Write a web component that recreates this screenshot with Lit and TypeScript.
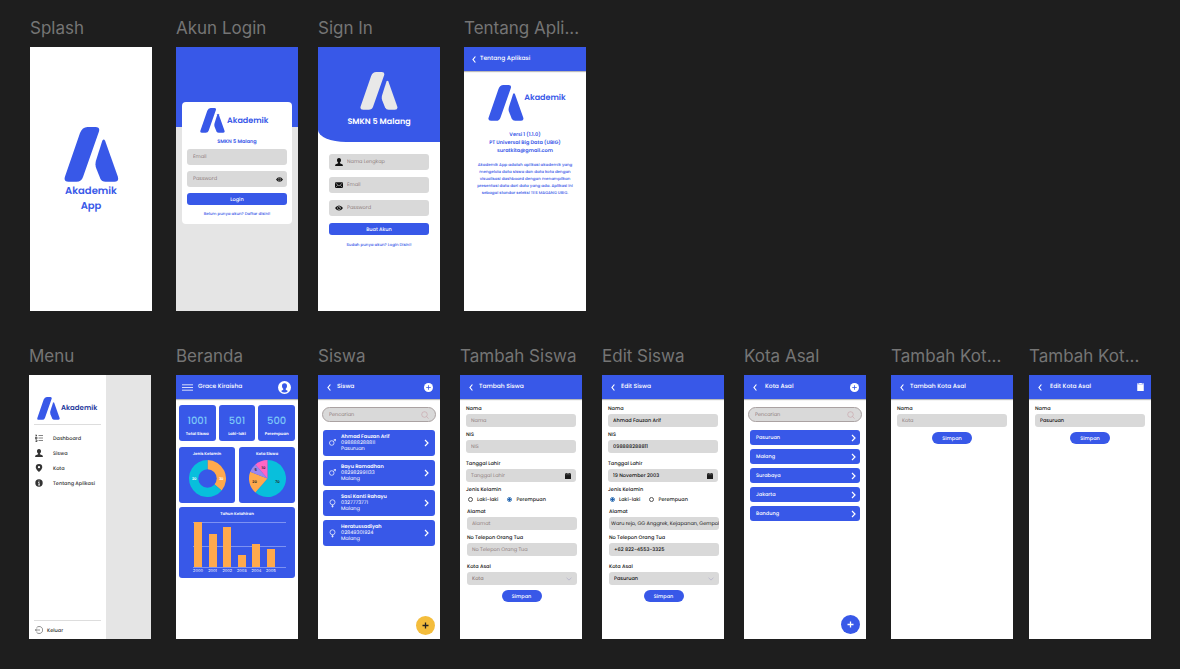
import { LitElement, html, css, svg, nothing } from "lit";
import { customElement, property } from "lit/decorators.js";
import { classMap } from "lit/directives/class-map.js";
import { styleMap } from "lit/directives/style-map.js";

const base = css`
  :host {
    --blue: #3858e8;
    --field: #d9d9d9;
    --edge: #e5e5e5;
    display: flex;
    flex-direction: column;
    flex: 1;
    min-height: 0;
    font-family: Poppins, Inter, sans-serif;
    font-size: 5px;
    line-height: 7px;
    text-rendering: geometricPrecision;
    color: #222;
  }
  *, *::before, *::after { box-sizing: border-box; }
  svg { display: block; flex: none; }
  p, h3, ul { margin: 0; padding: 0; }
  button, input, select {
    font: inherit;
    color: inherit;
    text-rendering: inherit;
    margin: 0;
    padding: 0;
    border: 0;
    background: none;
    min-width: 0;
  }
  button { cursor: pointer; }
  a { color: var(--blue); text-decoration: none; }
  ::placeholder { color: #8f7e7e; opacity: 1; }
  .brand { font-weight: 600; color: var(--blue); }
  .box {
    display: flex;
    align-items: center;
    background: var(--field);
    border-radius: 3px;
  }
  .box input, .box select { flex: 1; height: 100%; outline: none; }
`;

const logo = (size: number, color = "#3858e8") => html`
  <svg width=${size} height=${size} viewBox="0 0 54 55" fill=${color} aria-hidden="true">
    <path d="M23 0H31Q36 0 34.3 5L18.5 50Q17 54.7 12 54.7H4Q-1.2 54.7 .5 49.5L15.5 6Q17.8 0 23 0Z" />
    <path d="M37.8 13.8Q39.2 11.3 40.6 13.8L53.3 49.5Q54.8 54.7 50 54.7H41Q37.3 54.7 35.8 51.5L31.6 41Q30.4 37.6 31.5 33.5Z" />
  </svg>`;

const eye = (w = 8) => html`
  <svg width=${w} height=${w} viewBox="0 0 16 16" aria-hidden="true">
    <path d="M0 8Q3.5 3 8 3T16 8Q12.5 13 8 13T0 8Z" fill="#111" />
    <circle cx="8" cy="8" r="3.2" fill="none" stroke="#d9d9d9" stroke-width="1" />
    <circle cx="9" cy="7" r=".9" fill="#d9d9d9" />
  </svg>`;

const person = (color: string) => html`
  <svg width="8" height="8" viewBox="0 0 16 16" fill=${color} aria-hidden="true">
    <path d="M8 0C5 0 3.8 2.3 4 4.8 4.2 7 5.3 8.2 6.2 9V10.6L1.6 12.4Q.2 13 .2 16H15.8Q15.8 13 14.4 12.4L9.8 10.6V9C10.7 8.2 11.8 7 12 4.8 12.2 2.3 11 0 8 0Z" />
  </svg>`;

const mail = html`
  <svg width="8" height="8" viewBox="0 0 16 16" aria-hidden="true">
    <rect y="2.5" width="16" height="11.5" rx="1.5" fill="#111" />
    <path d="M1 4L8 10L15 4M1.2 12.8L5.6 8.4M14.8 12.8L10.4 8.4" fill="none" stroke="#d9d9d9" stroke-width="1.1" />
  </svg>`;

const chevronLeft = html`
  <svg width="4" height="7" viewBox="0 0 4 7" aria-hidden="true">
    <path d="M3.4 .5L1 3.5L3.4 6.5" fill="none" stroke="#fff" stroke-width="1.2" />
  </svg>`;

const chevronRight = html`
  <svg width="5" height="8" viewBox="0 0 5 8" aria-hidden="true">
    <path d="M1 1L4 4L1 7" fill="none" stroke="#fff" stroke-width="1.2" />
  </svg>`;

const chevronDown = html`
  <svg width="6" height="4" viewBox="0 0 6 4" aria-hidden="true">
    <path d="M.6 .8L3 3.1L5.4 .8" fill="none" stroke="#a9a6c4" stroke-width=".6" />
  </svg>`;

const calendar = html`
  <svg width="6" height="6" viewBox="0 0 14 14" aria-hidden="true">
    <path d="M0 1H3V0H5V1H9V0H11V1H14V14H0Z" fill="#1b1b1b" />
    <path d="M1 4H13" stroke="#777" stroke-width="1" />
  </svg>`;

const magnifier = html`
  <svg width="8" height="8" viewBox="0 0 16 16" fill="none" stroke="#c9a5ab" stroke-width="1.3" aria-hidden="true">
    <circle cx="7" cy="7" r="5.6" /><path d="M11 11L15 15.2" />
  </svg>`;

const addDisc = html`
  <svg width="9" height="9" viewBox="0 0 18 18" aria-hidden="true">
    <circle cx="9" cy="9" r="9" fill="#fff" />
    <path d="M9 4.5V13.5M4.5 9H13.5" stroke="#3858e8" stroke-width="1.6" />
  </svg>`;

const trash = html`
  <svg width="7" height="8" viewBox="0 0 14 16" fill="#fff" aria-hidden="true">
    <path d="M0 1H4L5 0H9L10 1H14V2.8H0ZM.5 3.6H13.5V16H.5Z" />
  </svg>`;

/* ---------- Shared bar at the top of the inner screens ---------- */

@customElement("top-bar")
export class TopBar extends LitElement {
  @property() heading = "";
  @property() action = "";
  @property() spacing = "";
  static styles = [base, css`
    :host { flex: none; }
    header {
      display: flex;
      align-items: center;
      gap: 6px;
      height: 24px;
      padding: 0 7px 0 9px;
      background: var(--blue);
      color: #fff;
      font-size: 6px;
      box-shadow: 0 1px 1px #0004;
    }
    header.tight { gap: 4px; padding-left: 8px; }
    header.wide { gap: 8px; }
    h3 { flex: 1; font-size: 6px; font-weight: 500; white-space: nowrap; }
    button { display: flex; }
  `];
  render() {
    return html`<header class=${this.spacing}>
      <button aria-label="Kembali">${chevronLeft}</button>
      <h3>${this.heading}</h3>
      ${this.action === "add" ? html`<button aria-label="Tambah">${addDisc}</button>` : nothing}
      ${this.action === "delete" ? html`<button aria-label="Hapus">${trash}</button>` : nothing}
    </header>`;
  }
}

@customElement("splash-screen")
export class SplashScreen extends LitElement {
  static styles = [base, css`
    :host { align-items: center; gap: 1px; padding-top: 80px; }
    .brand { font-size: 10px; line-height: 15px; text-align: center; }
  `];
  render() {
    return html`${logo(55)}<p class="brand">Akademik<br />App</p>`;
  }
}

@customElement("login-screen")
export class LoginScreen extends LitElement {
  static styles = [base, css`
    :host {
      padding: 55px 6px 0;
      background: linear-gradient(var(--blue) 80px, var(--edge) 80px);
    }
    form {
      display: flex;
      flex-direction: column;
      gap: 6px;
      padding: 6px 5px;
      background: #fff;
      border-radius: 4px;
    }
    .head { display: flex; align-items: center; gap: 2px; padding-left: 13px; }
    .head .brand { font-size: 8px; }
    .school { text-align: center; margin: -1px 0 -2px; }
    .box { height: 16px; padding: 0 4px 0 6px; }
    .submit {
      height: 12px;
      border-radius: 3px;
      background: var(--blue);
      color: #fff;
      font-weight: 500;
    }
    a { text-align: center; font-size: 4px; font-weight: 500; }
  `];
  render() {
    return html`<form>
      <div class="head">${logo(25)}<span class="brand">Akademik</span></div>
      <p class="brand school">SMKN 5 Malang</p>
      <label class="box"><input type="email" placeholder="Email" aria-label="Email" /></label>
      <label class="box"><input type="password" placeholder="Password" aria-label="Password" />${eye(7)}</label>
      <button class="submit" type="button">Login</button>
      <a href="#daftar">Belum punya akun? Daftar disini!</a>
    </form>`;
  }
}

@customElement("signup-screen")
export class SignupScreen extends LitElement {
  static styles = [base, css`
    .hero {
      display: flex;
      flex-direction: column;
      align-items: center;
      gap: 8px;
      height: 95px;
      padding-top: 25px;
      background: var(--blue);
      border-bottom-left-radius: 28px 12px;
      color: #fff;
      font-size: 8px;
      font-weight: 600;
    }
    form { display: flex; flex-direction: column; gap: 7px; padding: 12px 11px; }
    .box { height: 16px; padding: 0 6px; gap: 4px; }
    .submit {
      height: 12px;
      border-radius: 3px;
      background: var(--blue);
      color: #fff;
      font-weight: 500;
    }
    a { text-align: center; font-size: 4px; font-weight: 500; }
  `];
  render() {
    return html`
      <div class="hero">${logo(38, "#e8e8e8")}<span>SMKN 5 Malang</span></div>
      <form>
        <label class="box">${person("#111")}<input placeholder="Nama Lengkap" aria-label="Nama Lengkap" /></label>
        <label class="box">${mail}<input type="email" placeholder="Email" aria-label="Email" /></label>
        <label class="box">${eye()}<input type="password" placeholder="Password" aria-label="Password" /></label>
        <button class="submit" type="button">Buat Akun</button>
        <a href="#login">Sudah punya akun? Login Disini!</a>
      </form>`;
  }
}

@customElement("about-screen")
export class AboutScreen extends LitElement {
  static styles = [base, css`
    .head { display: flex; justify-content: center; padding: 14px 0 0 4px; }
    .head .brand { font-size: 8px; line-height: 26px; }
    .facts { margin-top: 10px; text-align: center; line-height: 8px; }
    .blurb {
      padding: 7px 8px 0;
      font-size: 4px;
      line-height: 7px;
      font-weight: 500;
      text-align: center;
      color: var(--blue);
    }
  `];
  render() {
    return html`
      <top-bar heading="Tentang Aplikasi" spacing="tight"></top-bar>
      <div class="head">${logo(36)}<span class="brand">Akademik</span></div>
      <p class="brand facts">Versi 1 (1.1.0)<br />PT Universal Big Data (UBIG)<br />suratkita@gmail.com</p>
      <p class="blurb">
        Akademik App adalah aplikasi akademik yang<br />
        mengelola data siswa dan data kota dengan<br />
        visualisasi dashboard dengan menampilkan<br />
        presentasi data dari data yang ada. Aplikasi ini<br />
        sebagai standar seleksi TES MAGANG UBIG.
      </p>`;
  }
}

@customElement("menu-screen")
export class MenuScreen extends LitElement {
  static styles = [base, css`
    :host { background: linear-gradient(90deg, #fff 77px, var(--edge) 77px); }
    nav {
      display: flex;
      flex-direction: column;
      flex: 1;
      width: 77px;
      padding: 22px 5px 5px;
    }
    .head {
      display: flex;
      align-items: center;
      gap: 1px;
      padding: 0 3px 4px;
      border-bottom: 1px solid #ddd;
    }
    .head .brand { font-size: 7px; color: #24389c; }
    ul { display: flex; flex-direction: column; gap: 7px; list-style: none; padding: 9px 1px; flex: 1; }
    a { display: flex; align-items: center; gap: 10px; height: 8px; color: #333; font-weight: 500; }
    .out { gap: 4px; height: 14px; padding: 5px 1px 0; border-top: 1px solid #ddd; }
  `];
  render() {
    return html`<nav>
      <div class="head">${logo(23)}<span class="brand">Akademik</span></div>
      <ul>
        <li><a href="#dashboard">
          <svg width="8" height="8" viewBox="0 0 16 16" fill="none" stroke="#333" stroke-width="1.2">
            <path d="M7 3H16M7 8H16M7 13H16" /><path d="M2 1V4.5M4 3H2M1 6.5H4V9.5H1ZM1 12H4V15H1" stroke-width="1.6" />
          </svg>Dashboard</a></li>
        <li><a href="#siswa">${person("#333")}Siswa</a></li>
        <li><a href="#kota">
          <svg width="8" height="8" viewBox="0 0 16 16" fill="#333">
            <path fill-rule="evenodd" d="M8 0A6.5 6.5 0 0 0 1.5 6.5C1.5 10.5 8 16 8 16S14.5 10.5 14.5 6.5A6.5 6.5 0 0 0 8 0ZM8 4A2.3 2.3 0 1 1 8 8.6A2.3 2.3 0 1 1 8 4Z" />
          </svg>Kota</a></li>
        <li><a href="#tentang">
          <svg width="8" height="8" viewBox="0 0 16 16">
            <circle cx="8" cy="8" r="7.4" fill="#333" />
            <path d="M8 3.2V5.2M6.4 7H8.2V12M6.2 12H10" fill="none" stroke="#fff" stroke-width="1.7" />
          </svg>Tentang Aplikasi</a></li>
      </ul>
      <a class="out" href="#keluar">
        <svg width="8" height="8" viewBox="0 0 16 16" fill="none" stroke="#333" stroke-width="1.1">
          <path d="M3 3.5A7 7 0 1 1 3 12.5M10 8H.8M3.5 5.2L.8 8L3.5 10.8" />
        </svg>Keluar</a>
    </nav>`;
  }
}

interface Slice { from: number; to: number; color: string; label: string; x: number; y: number; }

const wedge = (s: Slice) => {
  const at = (deg: number) => {
    const a = (deg * Math.PI) / 180;
    return `${(50 + 50 * Math.sin(a)).toFixed(2)} ${(50 - 50 * Math.cos(a)).toFixed(2)}`;
  };
  const large = s.to - s.from > 180 ? 1 : 0;
  return svg`<path fill=${s.color} d="M50 50L${at(s.from)}A50 50 0 ${large} 1 ${at(s.to)}Z" />`;
};

const gender: Slice[] = [
  { from: 0, to: 130, color: "#ffa94d", label: "30", x: 87, y: 49 },
  { from: 130, to: 360, color: "#08bfdc", label: "20", x: 14, y: 49 },
];
const cities: Slice[] = [
  { from: 0, to: 221, color: "#08bfdc", label: "70", x: 77, y: 57 },
  { from: 221, to: 291, color: "#ffa94d", label: "20", x: 15, y: 57 },
  { from: 291, to: 319, color: "#9b87ee", label: "5", x: 18, y: 27 },
  { from: 319, to: 360, color: "#ff66c4", label: "10", x: 39, y: 20 },
];
const births = [
  { year: "2000", value: 45 }, { year: "2001", value: 33 }, { year: "2002", value: 40 },
  { year: "2003", value: 12 }, { year: "2004", value: 23 }, { year: "2005", value: 18 },
];

@customElement("home-screen")
export class HomeScreen extends LitElement {
  static styles = [base, css`
    header {
      display: flex;
      align-items: center;
      gap: 5px;
      height: 24px;
      padding: 0 7px 0 6px;
      background: var(--blue);
      color: #fff;
      box-shadow: 0 1px 1px #0004;
    }
    h3 { flex: 1; font-size: 6px; font-weight: 500; }
    main { display: flex; flex-direction: column; gap: 4px; padding: 6px 3px; }
    .stats, .charts { display: grid; gap: 3px; grid-template-columns: repeat(3, 1fr); }
    .charts { grid-template-columns: 1fr 1fr; gap: 4px; }
    .tile {
      display: flex;
      flex-direction: column;
      align-items: center;
      border-radius: 3px;
      background: var(--blue);
      color: #fff;
      font-size: 4px;
      font-weight: 600;
    }
    .stats .tile { height: 36px; padding-top: 9px; gap: 3px; margin-bottom: 2px; }
    .stats strong { font-size: 10px; line-height: 14px; font-weight: 500; color: #7cc6f7; }
    .charts .tile { height: 56px; padding-top: 4px; gap: 2px; }
    .charts text { font-size: 10px; text-anchor: middle; }
    .years { height: 71px; padding: 4px 9px 3px; gap: 4px; }
    .plot {
      display: flex;
      justify-content: space-between;
      align-items: flex-end;
      align-self: stretch;
      height: 48px;
      margin-left: 5px;
      padding: 0 11px 0 1px;
      border-bottom: 1px solid #7d92f2;
      background: linear-gradient(#7d92f2 1px, transparent 1px 24px, #7d92f2 24px 25px, transparent 25px);
    }
    .bar { width: 8px; background: #ffa94d; }
    .axis {
      display: flex;
      justify-content: space-between;
      align-self: stretch;
      margin: -4px 10px 0 5px;
      font-weight: 400;
    }
    .axis span { width: 10px; text-align: center; }
  `];
  render() {
    return html`
      <header>
        <svg width="11" height="7" viewBox="0 0 11 7" stroke="#fff" stroke-width=".8"><path d="M0 .8H11M0 3.5H11M0 6.2H11" /></svg>
        <h3>Grace Kiraisha</h3>
        <svg width="13" height="13" viewBox="0 0 26 26">
          <circle cx="13" cy="13" r="13" fill="#fff" />
          <path d="M13 4.5C9.5 4.5 7.8 7 8 10.5 8.1 12.8 9.3 14.6 10.5 15.6V17.5L6 19.8Q9 23 13 23T20 19.8L15.5 17.5V15.6C16.7 14.6 17.9 12.8 18 10.5 18.2 7 16.5 4.5 13 4.5Z" fill="#3858e8" />
        </svg>
      </header>
      <main>
        <div class="stats">
          <div class="tile"><strong>1001</strong>Total Siswa</div>
          <div class="tile"><strong>501</strong>Laki-laki</div>
          <div class="tile"><strong>500</strong>Perempuan</div>
        </div>
        <div class="charts">
          <div class="tile">Jenis Kelamin
            <svg width="37" height="37" viewBox="0 0 100 100">
              ${gender.map(wedge)}<circle cx="50" cy="50" r="25" fill="#3858e8" />
              ${gender.map((s) => svg`<text x=${s.x} y=${s.y + 4} fill="#fff">${s.label}</text>`)}
            </svg>
          </div>
          <div class="tile">Kota Siswa
            <svg width="37" height="37" viewBox="0 0 100 100">
              ${cities.map(wedge)}
              ${cities.map((s) => svg`<text x=${s.x} y=${s.y + 4} fill="#222">${s.label}</text>`)}
            </svg>
          </div>
        </div>
        <div class="tile years">Tahun Kelahiran
          <div class="plot">${births.map((b) => html`<div class="bar" style=${styleMap({ height: `${b.value}px` })}></div>`)}</div>
          <div class="axis">${births.map((b) => html`<span>${b.year}</span>`)}</div>
        </div>
      </main>`;
  }
}

const fabStyles = css`
  .fab {
    display: flex;
    align-items: center;
    justify-content: center;
    align-self: flex-end;
    width: 19px;
    height: 19px;
    margin: auto 5px 4px 0;
    border-radius: 50%;
    background: #f4bd3c;
    color: #222;
  }
  .fab.blue { margin: auto 6px 5px 0; background: var(--blue); color: #fff; }
  .search {
    height: 15px;
    margin: 8px 4px;
    padding: 0 6px;
    border: 1px solid #aaa2a2;
    border-radius: 8px;
  }
`;

const fab = (blue: boolean) => html`
  <button class=${classMap({ fab: true, blue })} aria-label="Tambah">
    <svg width="7" height="7" viewBox="0 0 7 7"><path d="M3.5 .5V6.5M.5 3.5H6.5" stroke="currentColor" stroke-width="1.3" /></svg>
  </button>`;

const search = html`
  <label class="box search"><input placeholder="Pencarian" aria-label="Pencarian" />${magnifier}</label>`;

const students = [
  { male: true, name: "Ahmad Fauzan Arif", phone: "098888288811", city: "Pasuruan" },
  { male: true, name: "Bayu Ramadhan", phone: "082982991133", city: "Malang" },
  { male: false, name: "Sasi Kanti Rahayu", phone: "0327773771", city: "Malang" },
  { male: false, name: "Heratussadiyah", phone: "02849301924", city: "Malang" },
];

@customElement("students-screen")
export class StudentsScreen extends LitElement {
  static styles = [base, fabStyles, css`
    ul { display: flex; flex-direction: column; gap: 4px; padding: 0 5px; list-style: none; }
    a {
      display: flex;
      align-items: center;
      gap: 5px;
      height: 26px;
      padding: 0 6px;
      border-radius: 3px;
      background: var(--blue);
      color: #fff;
      line-height: 6px;
    }
    a > span { flex: 1; }
    b { font-weight: 600; }
  `];
  render() {
    return html`
      <top-bar heading="Siswa" action="add"></top-bar>
      ${search}
      <ul>${students.map((s) => html`<li><a href="#siswa">
        <svg width="7" height="9" viewBox="0 0 14 18" fill="none" stroke="#fff" stroke-width="1.4">
          ${s.male
            ? svg`<circle cx="5.5" cy="8" r="4.6" /><path d="M9 4.5L13 1M9.5 .8H13.2V4.5" />`
            : svg`<circle cx="7" cy="6.5" r="5" /><path d="M7 11.5V17M4.5 14.4H9.5" />`}
        </svg>
        <span><b>${s.name}</b><br />${s.phone}<br />${s.city}</span>
        ${chevronRight}
      </a></li>`)}</ul>
      ${fab(false)}`;
  }
}

@customElement("cities-screen")
export class CitiesScreen extends LitElement {
  static styles = [base, fabStyles, css`
    ul { display: flex; flex-direction: column; gap: 4px; padding: 0 6px; list-style: none; }
    a {
      display: flex;
      align-items: center;
      justify-content: space-between;
      height: 15px;
      padding: 0 4px 0 6px;
      border-radius: 3px;
      background: var(--blue);
      color: #fff;
      font-weight: 500;
    }
  `];
  render() {
    return html`
      <top-bar heading="Kota Asal" action="add" spacing="wide"></top-bar>
      ${search}
      <ul>${["Pasuruan", "Malang", "Surabaya", "Jakarta", "Bandung"].map(
        (c) => html`<li><a href="#kota">${c}${chevronRight}</a></li>`)}</ul>
      ${fab(true)}`;
  }
}

const formStyles = css`
  form { display: flex; flex-direction: column; padding: 6px 6px 0; font-weight: 500; }
  .field { display: flex; flex-direction: column; gap: 2px; margin-bottom: 4px; color: #111; }
  .field.loose { margin-bottom: 7px; }
  .field .box { height: 13px; width: 110px; padding: 0 5px; }
  .field .box.long { padding: 0 0 0 2px; font-weight: 400; }
  select { appearance: none; }
  .empty { color: #8f7e7e; }
  ::placeholder { font-weight: 400; }
  .save {
    align-self: center;
    width: 40px;
    height: 12px;
    margin-top: 1px;
    border-radius: 6px;
    background: var(--blue);
    color: #fff;
    font-weight: 500;
  }
`;

@customElement("student-form")
export class StudentForm extends LitElement {
  @property() heading = "";
  @property({ type: Boolean }) filled = false;
  static styles = [base, formStyles, css`
    fieldset { display: flex; gap: 7px; margin: 0 0 5px; padding: 0; border: 0; }
    legend { padding: 0; margin-bottom: 3px; color: #111; }
    .radio { display: flex; align-items: center; gap: 4px; height: 7px; margin-left: 2px; }
    .radio input {
      appearance: none;
      width: 5px;
      height: 5px;
      border: 1px solid #555;
      border-radius: 50%;
    }
    .radio input:checked {
      border-color: #3a78b8;
      background: radial-gradient(#1f5fae 50%, #fff 55%);
    }
    .lower { display: flex; flex-direction: column; padding-left: 1px; }
  `];
  private field(id: string, label: string, value: string, loose = false, icon: unknown = nothing) {
    const long = this.filled && value.length > 30;
    return html`<div class=${classMap({ field: true, loose })}>
      <label for=${id}>${label}</label>
      <div class=${classMap({ box: true, long })}>
        <input id=${id} placeholder=${label} .value=${this.filled ? value : ""} />${icon}
      </div>
    </div>`;
  }
  render() {
    const f = this.filled;
    return html`
      <top-bar heading=${this.heading}></top-bar>
      <form>
        ${this.field("nama", "Nama", "Ahmad Fauzan Arif")}
        ${this.field("nis", "NIS", "098888288811", true)}
        ${this.field("lahir", "Tanggal Lahir", "19 November 2003", false, calendar)}
        <fieldset>
          <legend>Jenis Kelamin</legend>
          <label class="radio"><input type="radio" name="jk" .checked=${f} />Laki-laki</label>
          <label class="radio"><input type="radio" name="jk" .checked=${!f} />Perempuan</label>
        </fieldset>
        <div class="lower">
          ${this.field("alamat", "Alamat", "Waru rejo, GG Anggrek, Kejapanan, Gempol")}
          ${this.field("telp", "No Telepon Orang Tua", "+62 822-4553-3325", true)}
          <div class="field">
            <label for="kota">Kota Asal</label>
            <div class="box">
              <select id="kota" class=${classMap({ empty: !f })}><option>${f ? "Pasuruan" : "Kota"}</option></select>${chevronDown}
            </div>
          </div>
          <button class="save" type="button">Simpan</button>
        </div>
      </form>`;
  }
}

@customElement("city-form")
export class CityForm extends LitElement {
  @property() heading = "";
  @property() action = "";
  @property() spacing = "";
  @property() city = "";
  static styles = [base, formStyles];
  render() {
    return html`
      <top-bar heading=${this.heading} action=${this.action} spacing=${this.spacing}></top-bar>
      <form>
        <div class="field">
          <label for="nama">Nama</label>
          <div class="box"><input id="nama" placeholder="Kota" .value=${this.city} /></div>
        </div>
        <button class="save" type="button">Simpan</button>
      </form>`;
  }
}

/* ---------- Canvas with the artboards ---------- */

const boards = [
  { x: 30, y: 16, title: "Splash", body: html`<splash-screen></splash-screen>` },
  { x: 176, y: 16, title: "Akun Login", body: html`<login-screen></login-screen>` },
  { x: 318, y: 16, title: "Sign In", body: html`<signup-screen></signup-screen>` },
  { x: 464, y: 16, title: "Tentang Apli...", body: html`<about-screen></about-screen>` },
  { x: 29, y: 344, title: "Menu", body: html`<menu-screen></menu-screen>` },
  { x: 176, y: 344, title: "Beranda", body: html`<home-screen></home-screen>` },
  { x: 318, y: 344, title: "Siswa", body: html`<students-screen></students-screen>` },
  { x: 460, y: 344, title: "Tambah Siswa", body: html`<student-form heading="Tambah Siswa"></student-form>` },
  { x: 602, y: 344, title: "Edit Siswa", body: html`<student-form heading="Edit Siswa" filled></student-form>` },
  { x: 744, y: 344, title: "Kota Asal", body: html`<cities-screen></cities-screen>` },
  { x: 891, y: 344, title: "Tambah Kot...", body: html`<city-form heading="Tambah Kota Asal"></city-form>` },
  { x: 1029, y: 344, title: "Tambah Kot...", body: html`<city-form heading="Edit Kota Asal" action="delete" spacing="wide" city="Pasuruan"></city-form>` },
];

@customElement("app-root")
export class AppRoot extends LitElement {
  static styles = css`
    :host {
      display: block;
      position: relative;
      min-height: 100vh;
      overflow: hidden;
      background: #1e1e1e;
      font-family: Inter, sans-serif;
    }
    .board { position: absolute; width: 122px; }
    h2 {
      margin: 0 0 6px;
      font-size: 17px;
      line-height: 25px;
      font-weight: 400;
      color: #757575;
      white-space: nowrap;
    }
    .frame {
      display: flex;
      flex-direction: column;
      height: 264px;
      background: #fff;
      overflow: hidden;
    }
  `;
  render() {
    return boards.map((b) => html`
      <section class="board" style=${styleMap({ left: `${b.x}px`, top: `${b.y}px` })}>
        <h2>${b.title}</h2>
        <div class="frame">${b.body}</div>
      </section>`);
  }
}
